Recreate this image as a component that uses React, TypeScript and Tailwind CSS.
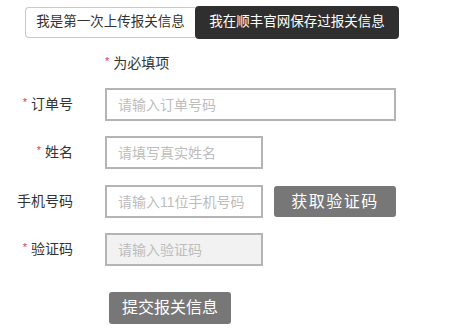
import { ReactNode } from "react";

const font = "font-['Liberation_Sans','Noto_Sans_CJK_SC',sans-serif]";

function Label({ text, required }: { text: string; required?: boolean }) {
  return (
    <div className="w-[73px] shrink-0 flex justify-end items-center text-[14px] text-[#333]">
      {required && <span className="text-[#e03c3c] text-[11px] mr-[4px] -mt-[4px]">*</span>}
      <span>{text}</span>
    </div>
  );
}

function Row({ label, required, children, top }: { label: string; required?: boolean; children: ReactNode; top: string }) {
  return (
    <div className={`flex items-center ${top}`}>
      <Label text={label} required={required} />
      <div className="ml-[32px] flex items-center">{children}</div>
    </div>
  );
}

export default function App() {
  return (
    <div className={`w-[450px] h-[330px] bg-white overflow-hidden ${font}`}>
      <div className="pt-[6px] pl-[25px] flex">
        <button className="w-[170px] border border-[#c8c8c8] border-r-0 rounded-l-[4px] bg-white text-[13.5px] text-[#333] mt-[1px] h-[31px]">
          我是第一次上传报关信息
        </button>
        <button className="w-[204px] h-[33px] rounded-[4px] bg-[#2f2f2f] text-[13.5px] text-white">
          我在顺丰官网保存过报关信息
        </button>
      </div>
      <div className="mt-[14px] pl-[105px] h-[20px] flex items-center text-[14px] text-[#333]">
        <span className="text-[#e03c3c] text-[11px] mr-[4px] -mt-[4px]">*</span>
        为必填项
      </div>
      <Row label="订单号" required top="mt-[15px]">
        <input
          placeholder="请输入订单号码"
          className="w-[291px] h-[33px] border-2 border-[#b4b4b4] px-[11px] text-[14px] outline-none placeholder:text-[#bdbdbd]"
        />
      </Row>
      <Row label="姓名" required top="mt-[15px]">
        <input
          placeholder="请填写真实姓名"
          className="w-[158px] h-[33px] border-2 border-[#b4b4b4] px-[11px] text-[14px] outline-none placeholder:text-[#bdbdbd]"
        />
      </Row>
      <Row label="手机号码" top="mt-[16px]">
        <input
          placeholder="请输入11位手机号码"
          className="w-[158px] h-[33px] border-2 border-[#b4b4b4] px-[11px] text-[14px] outline-none placeholder:text-[#bdbdbd]"
        />
        <button className="ml-[11px] w-[122px] h-[31px] rounded-[3px] bg-[#777] text-white text-[16px] tracking-[1.5px]">
          获取验证码
        </button>
      </Row>
      <Row label="验证码" required top="mt-[15px]">
        <input
          placeholder="请输入验证码"
          className="w-[158px] h-[33px] border-2 border-[#b4b4b4] bg-[#f2f2f2] px-[11px] text-[14px] outline-none placeholder:text-[#bdbdbd]"
        />
      </Row>
      <div className="mt-[26px] pl-[109px]">
        <button className="w-[122px] h-[32px] rounded-[3px] bg-[#777] text-white text-[16px]">
          提交报关信息
        </button>
      </div>
    </div>
  );
}
